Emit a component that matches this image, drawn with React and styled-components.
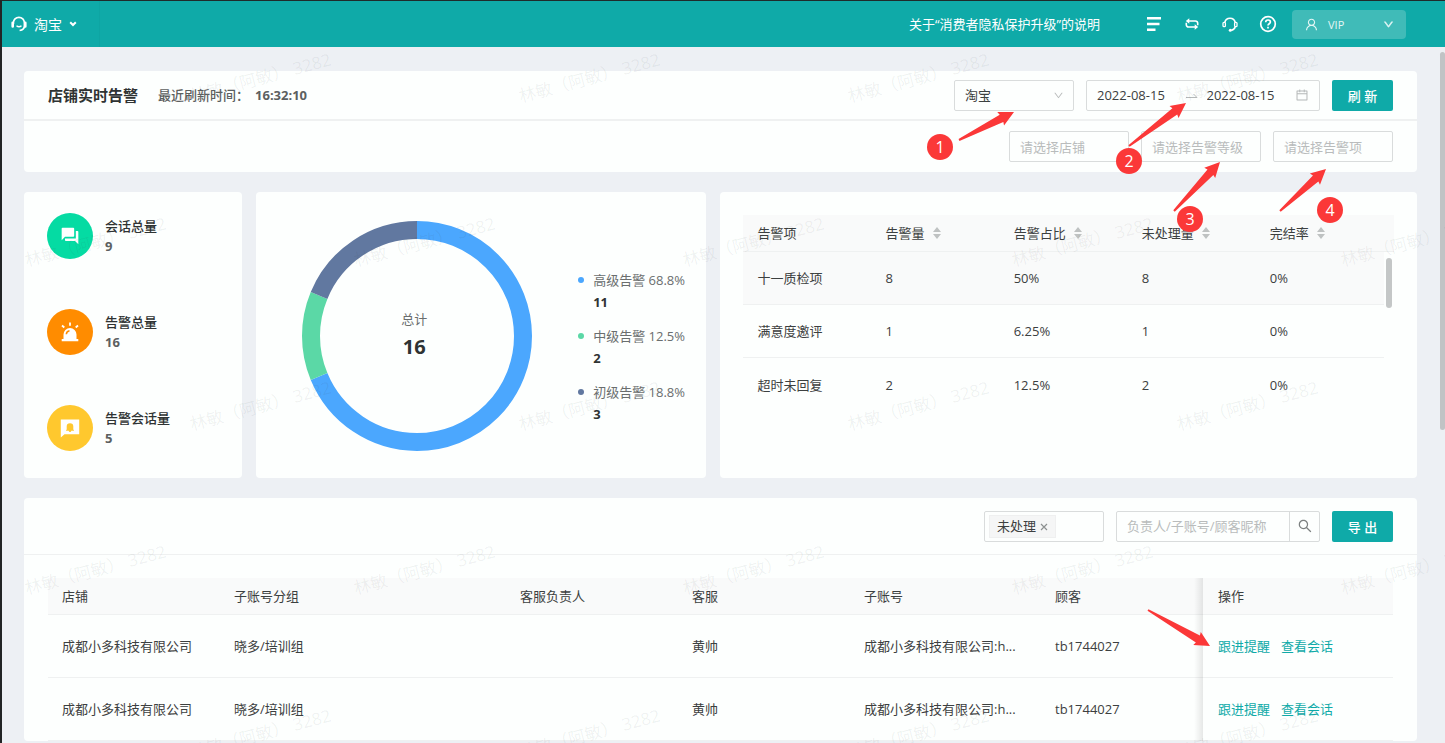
import React, { useState } from 'react';
import styled, { createGlobalStyle } from 'styled-components';
import { MdForum } from 'react-icons/md';
import { AiOutlineCalendar, AiOutlineDown, AiOutlineSearch, AiOutlineUser } from 'react-icons/ai';

const teal = '#0faaa8';
const red = '#fb3838';
const line = '#eff1f1';
const fieldBorder = '#d9dcdc';

const segments = [
  { name: '高级告警', percent: '68.8%', count: 11, color: '#4ba7fe' },
  { name: '中级告警', percent: '12.5%', count: 2, color: '#5bd8a6' },
  { name: '初级告警', percent: '18.8%', count: 3, color: '#6178a0' },
];

const alarms = [
  ['十一质检项', '8', '50%', '8', '0%'],
  ['满意度邀评', '1', '6.25%', '1', '0%'],
  ['超时未回复', '2', '12.5%', '2', '0%'],
];

const sessions = [1, 2].map(id => ({
  id,
  shop: '成都小多科技有限公司',
  group: '晓多/培训组',
  owner: '',
  agent: '黄帅',
  account: '成都小多科技有限公司:h...',
  customer: 'tb1744027',
}));

// coordinates are measured inside the Guide layer
const arrows = [
  { from: [59, 40], to: [114, 12] },
  { from: [229, 46], to: [286, 3] },
  { from: [274, 111], to: [320, 62] },
  { from: [380, 111], to: [426, 69] },
  { from: [248, 510], to: [310, 546] },
];

const markers = [
  { n: 1, x: 27, y: 34 },
  { n: 2, x: 216, y: 48 },
  { n: 3, x: 277, y: 106 },
  { n: 4, x: 417, y: 97 },
];

const GlobalStyle = createGlobalStyle`
  * {
    box-sizing: border-box;
  }

  body {
    margin: 0;
    overflow: hidden;
    background-color: #edf0f4;
  }

  body, input, select, button {
    font-family: 'Open Sans', 'Noto Sans CJK SC', sans-serif;
    font-size: 13px;
    color: #3c4040;
  }
`;

const Page = styled.div`
  position: relative;
  height: 100vh;
  overflow: hidden;
  border-top: 1px solid #1f2b2b;
  border-left: 2px solid #222425;
  line-height: 20px;
`;

const Header = styled.header`
  display: flex;
  align-items: center;
  height: 46px;
  padding-right: 39px;
  color: white;
  background-color: ${teal};
`;

const Brand = styled.button`
  display: flex;
  align-items: center;
  gap: 7px;
  width: 98px;
  height: 46px;
  padding: 0 9px;
  font-size: 14px;
  color: white;
  background-color: transparent;
  border: none;
  border-right: 1px solid #0ea5a3;
`;

const Notice = styled.a`
  margin-left: auto;
  padding-right: 35px;
  color: white;
  text-decoration: none;
`;

const HeaderButton = styled.button`
  display: flex;
  align-items: center;
  justify-content: center;
  width: 38px;
  height: 30px;
  padding: 0;
  color: white;
  background-color: transparent;
  border: none;
`;

const Account = styled.button`
  display: flex;
  align-items: center;
  gap: 9px;
  width: 114px;
  height: 29px;
  margin-left: 5px;
  padding: 0 12px;
  font-size: 11px;
  color: #e4f6f5;
  background-color: #40bbb8;
  border: none;
  border-radius: 4px;

  svg:last-child {
    margin-left: auto;
  }
`;

const Content = styled.main`
  display: flex;
  flex-direction: column;
  gap: 20px;
  padding: 24px 28px 0 22px;
`;

const Card = styled.section`
  min-width: 0;
  background-color: #fdfffe;
  border-radius: 4px;
`;

const Toolbar = styled.div`
  display: flex;
  align-items: center;
  justify-content: flex-end;
  gap: 12px;
  height: ${props => props.$height};
  padding: 0 24px;
  border-bottom: ${props => props.$border || '0'} solid ${line};
`;

const Title = styled.h1`
  margin: 0 8px 0 0;
  font-size: 15px;
  color: #2f3333;
`;

const Refreshed = styled.span`
  margin-right: auto;
  font-weight: 500;
  color: #5c6060;

  b {
    margin-left: 6px;
  }
`;

const SelectBox = styled.div`
  position: relative;
  width: 120px;
  color: #b9bcbc;

  svg {
    position: absolute;
    top: 10px;
    right: 10px;
    pointer-events: none;
  }
`;

const Select = styled.select`
  display: block;
  width: 100%;
  height: 31px;
  padding: 0 10px;
  color: ${props => (props.$empty ? '#b9bcbc' : '#3c4040')};
  background-color: transparent;
  border: 1px solid ${fieldBorder};
  border-radius: 2px;
  appearance: none;
`;

const Field = styled.div`
  display: flex;
  align-items: center;
  width: ${props => props.$width};
  height: 31px;
  color: #b4b8b8;
  border: 1px solid ${fieldBorder};
  border-radius: 2px;
`;

const DateField = styled(Field)`
  gap: 9px;
  padding: 0 10px;

  svg {
    flex: none;
  }
`;

const DateInput = styled.input`
  width: 80px;
  min-width: 0;
  padding: 0;
  background-color: transparent;
  border: none;
  outline: 0;
`;

const SearchInput = styled.input`
  flex: 1;
  min-width: 0;
  padding: 0 10px;
  background-color: transparent;
  border: none;
  outline: 0;

  &::placeholder {
    color: #b9bcbc;
  }
`;

const SearchButton = styled.button`
  display: flex;
  align-items: center;
  justify-content: center;
  width: 30px;
  height: 29px;
  padding: 0;
  color: #7c8080;
  background-color: transparent;
  border: none;
  border-left: 1px solid ${fieldBorder};
`;

const PrimaryButton = styled.button`
  width: 61px;
  height: 31px;
  padding: 0;
  font-weight: 500;
  color: white;
  background-color: ${teal};
  border: none;
  border-radius: 2px;
`;

const Tag = styled.span`
  display: flex;
  align-items: center;
  gap: 4px;
  height: 23px;
  margin-left: 4px;
  padding: 0 7px;
  color: #3c4040;
  background-color: #f5f6f6;
  border: 1px solid #eff0f0;
`;

const TagClose = styled.button`
  display: flex;
  padding: 2px 0 0;
  color: #8c9090;
  background-color: transparent;
  border: none;
`;

const Overview = styled.div`
  display: grid;
  grid-template-columns: 218fr 450fr 696fr;
  gap: 14px;
`;

const StatCard = styled(Card)`
  display: flex;
  flex-direction: column;
  gap: 50px;
  padding: 21px 23px 27px;
`;

const Stat = styled.div`
  display: flex;
  align-items: center;
  gap: 12px;
`;

const StatIcon = styled.span`
  display: flex;
  align-items: center;
  justify-content: center;
  width: 46px;
  height: 46px;
  color: white;
  background-color: ${props => props.$color};
  border-radius: 50%;
`;

const StatText = styled.div`
  font-weight: 700;
  color: #5c6060;

  strong {
    display: block;
    font-weight: 500;
    color: #2f3333;
  }
`;

const ChartCard = styled(Card)`
  display: flex;
  gap: 46px;
  padding: 29px 0 0 46px;
`;

const Donut = styled.div`
  position: relative;
  width: 230px;
  height: 230px;
`;

const DonutLabel = styled.div`
  position: absolute;
  inset: 0;
  display: flex;
  flex-direction: column;
  align-items: center;
  justify-content: center;
  gap: 8px;
  padding: 0 6px 6px 0;
  color: #6a6e6e;

  b {
    font-size: 20px;
    color: #2f3333;
  }
`;

const Legend = styled.ul`
  display: flex;
  flex-direction: column;
  gap: 12px;
  margin: 48px 0 0;
  padding: 0;
  list-style: none;
  line-height: 22px;
  color: #6a6e6e;
`;

const LegendItem = styled.li`
  display: grid;
  grid-template-columns: 6px auto;
  column-gap: 9px;
  align-items: center;

  &::before {
    content: '';
    width: 6px;
    height: 6px;
    background-color: ${props => props.$color};
    border-radius: 50%;
  }

  b {
    grid-column: 2;
    color: #2f3333;
  }
`;

const AlarmCard = styled(Card)`
  padding: 23px 23px 0;
`;

const AlarmScroll = styled.div`
  position: relative;

  &::after {
    content: '';
    position: absolute;
    top: 43px;
    right: 2px;
    width: 6px;
    height: 50px;
    background-color: #c4c7c7;
    border-radius: 3px;
  }
`;

const Table = styled.table`
  width: 100%;
  table-layout: fixed;
  border-spacing: 0;

  th, td {
    padding: 0 14px;
    font-weight: 400;
    text-align: left;
    white-space: nowrap;
    border-bottom: 1px solid ${line};
  }

  th {
    height: 37px;
    background-color: #f9fafa;
  }
`;

const AlarmTable = styled(Table)`
  th:last-child {
    width: 10px;
    padding: 0;
  }

  td {
    height: 53px;
  }

  tbody tr:first-child td {
    background-color: #f9fafa;
  }

  tbody tr:last-child td {
    border-bottom: none;
  }
`;

const SortButton = styled.button`
  display: inline-flex;
  align-items: center;
  gap: 8px;
  padding: 0;
  background-color: transparent;
  border: none;
`;

const SessionWrap = styled.div`
  padding: 23px 24px 0;
`;

const SessionTable = styled(Table)`
  td {
    height: 63px;
  }

  th:last-child, td:last-child {
    position: relative;
    padding-left: 16px;
  }

  th:last-child::before, td:last-child::before {
    content: '';
    position: absolute;
    top: 0;
    bottom: -1px;
    left: -8px;
    width: 9px;
    background: linear-gradient(to right, rgba(0, 0, 0, 0), rgba(0, 0, 0, 0.09));
  }
`;

const Col = styled.col`
  width: ${props => props.$width};
`;

const Action = styled.a`
  margin-right: 11px;
  color: ${teal};
  text-decoration: none;
`;

const PageScroll = styled.div`
  position: absolute;
  top: 51px;
  right: 0;
  width: 5px;
  height: 378px;
  background-color: #c1c3c5;
  border-radius: 3px;
`;

const Watermark = styled.div`
  position: absolute;
  top: -5px;
  left: 0;
  right: 0;
  bottom: 0;
  overflow: hidden;
  pointer-events: none;
`;

const WatermarkRow = styled.div`
  display: flex;
  margin-left: ${props => (props.$shift ? '-71px' : '94px')};
`;

const WatermarkText = styled.span`
  flex: 0 0 329px;
  height: 164px;
  line-height: 164px;
  text-align: center;
  font-size: 17px;
  white-space: pre;
  color: rgba(60, 70, 70, 0.07);
  transform: rotate(-15deg);
`;

const Guide = styled.div`
  position: absolute;
  top: 99px;
  right: 0;
  width: 545px;
  height: 560px;
  pointer-events: none;
`;

const Marker = styled.span`
  position: absolute;
  width: 26px;
  height: 26px;
  line-height: 26px;
  font-size: 16px;
  text-align: center;
  color: white;
  background-color: ${red};
  border-radius: 50%;
`;

const CaretIcon = () => (
  <svg width="8" height="6" viewBox="0 0 8 6" fill="none" stroke="currentColor" strokeWidth="2">
    <path d="M1.2 1.2 4 4l2.8-2.8" />
  </svg>
);

const HeadsetIcon = () => (
  <svg width="16" height="16" viewBox="0 0 16 16" fill="none" stroke="currentColor" strokeWidth="1.7">
    <path d="M2.4 8V6.800a5.500 5.500 0 0 1 11 0V10c0 2.400-2 4-4.800 4.500" />
    <path d="M1.700 6.800v3.600M14.300 6.800v3.600" strokeWidth="2.600" strokeLinecap="round" />
    <path d="M5.500 9.700c1.500 1.200 3.500 1.200 5 0" strokeWidth="1.400" />
  </svg>
);

const ServiceIcon = () => (
  <svg width="16" height="16" viewBox="0 0 16 16" fill="none" stroke="currentColor" strokeWidth="1.6">
    <path d="M2.800 6.500a5.300 5.300 0 0 1 10.400 0" />
    <rect x="1" y="6.300" width="2.400" height="4.400" rx="1" strokeWidth="1.300" />
    <rect x="12.600" y="6.300" width="2.400" height="4.400" rx="1" strokeWidth="1.300" />
    <path d="M13.200 11c-.6 1.900-2 3-4 3.300" />
    <circle cx="8.300" cy="14.300" r="1.500" fill="currentColor" stroke="none" />
  </svg>
);

const MenuIcon = () => (
  <svg width="16" height="16" viewBox="0 0 16 16" fill="currentColor">
    <path d="M1 1h14v2.500H1zM1 6.700h12.500v2.500H1zM1 12.400h8.500v2.500H1z" />
  </svg>
);

const LoopIcon = () => (
  <svg width="14" height="12" viewBox="0 0 14 12" fill="none" stroke="currentColor" strokeWidth="1.600">
    <path d="M3 3h7.500a2.200 2.200 0 0 1 2.200 2.200v2M11 9H3.500a2.200 2.200 0 0 1-2.200-2.200v-2" />
    <path d="M4.300.3.800 3l3.500 2.700zM9.700 6.300 13.200 9l-3.500 2.700z" fill="currentColor" stroke="none" />
  </svg>
);

const HelpIcon = () => (
  <svg width="18" height="18" viewBox="0 0 18 18" fill="none" stroke="currentColor" strokeWidth="1.700">
    <circle cx="9" cy="9" r="7.300" />
    <path d="M6.700 7.200c0-3 4.700-2.800 4.700-.2 0 1.700-2.400 1.700-2.400 3.500" />
    <path d="M9 11.800v1.800" />
  </svg>
);

const SirenIcon = () => (
  <svg width="20" height="20" viewBox="0 0 20 20" fill="currentColor">
    <path d="M3.500 17v-4.500a6.500 6.500 0 0 1 13 0V17h1.800v2.200H1.700V17z" />
    <path d="M6.300 12.300c.2-2 1.300-3.200 3.200-3.500" fill="none" stroke="#ff8c00" strokeWidth="1.500" />
    <path d="M10 .5v3.200M2 3.500l2.300 2M18 3.500l-2.300 2" fill="none" stroke="currentColor" strokeWidth="1.800" />
  </svg>
);

const BellChatIcon = () => (
  <svg width="20" height="20" viewBox="0 0 20 20" fill="currentColor">
    <path d="M.800 1.500h18.400v14.800H4.500L.800 19.500z" />
    <path d="M6 12.800v-.6l.7-.8V8.500a3.300 3.300 0 0 1 6.600 0v2.900l.7.800v.6h-2.700a1.300 1.300 0 0 1-2.600 0z" fill="#ffc82e" />
  </svg>
);

const RangeArrow = () => (
  <svg width="12" height="8" viewBox="0 0 12 8" fill="none" stroke="currentColor">
    <path d="M0 6.500h11L7.500 3" />
  </svg>
);

const SortIcon = () => (
  <svg width="8" height="12" viewBox="0 0 8 12" fill="#bfc2c2">
    <path d="M4 0l4 5H0zM4 12L0 7h8z" />
  </svg>
);

const CloseIcon = () => (
  <svg width="8" height="8" viewBox="0 0 8 8" stroke="currentColor" strokeWidth="1.200">
    <path d="M1 1l6 6M7 1L1 7" />
  </svg>
);

const DonutChart = () => {
  const total = segments.reduce((sum, s) => sum + s.count, 0);
  let offset = 0;

  return (
    <svg width="230" height="230" viewBox="0 0 230 230">
      <g transform="rotate(-90 115 115)" fill="none" strokeWidth="18">
        {segments.map(s => {
          const share = (s.count / total) * 100;
          const start = offset;
          offset += share;
          return (
            <circle
              key={s.name}
              cx="115"
              cy="115"
              r="106"
              stroke={s.color}
              pathLength="100"
              strokeDasharray={`${share} ${100 - share}`}
              strokeDashoffset={-start}
            />
          );
        })}
      </g>
    </svg>
  );
};

// tapered arrow that starts as a point and ends in a wide head
const Arrow = ({ from, to }) => {
  const dx = to[0] - from[0];
  const dy = to[1] - from[1];
  const length = Math.hypot(dx, dy);
  const angle = (Math.atan2(dy, dx) * 180) / Math.PI;
  const neck = length - 14;
  const barb = length - 15;

  return (
    <path
      transform={`translate(${from[0]} ${from[1]}) rotate(${angle})`}
      d={`M0 -1 L${neck} -4 L${barb} -7.500 L${length} 0 L${barb} 7.500 L${neck} 4 L0 1z`}
      fill={red}
    />
  );
};

const App = () => {
  const [platform, setPlatform] = useState('淘宝');
  const [from, setFrom] = useState('2022-08-15');
  const [to, setTo] = useState('2022-08-15');
  const [keyword, setKeyword] = useState('');

  return (
    <>
      <GlobalStyle />
      <Page>
        <Header>
          <Brand>
            <HeadsetIcon />
            淘宝
            <CaretIcon />
          </Brand>
          <Notice href="#notice">关于“消费者隐私保护升级”的说明</Notice>
          <HeaderButton aria-label="menu">
            <MenuIcon />
          </HeaderButton>
          <HeaderButton aria-label="switch">
            <LoopIcon />
          </HeaderButton>
          <HeaderButton aria-label="service">
            <ServiceIcon />
          </HeaderButton>
          <HeaderButton aria-label="help">
            <HelpIcon />
          </HeaderButton>
          <Account>
            <AiOutlineUser size={15} />
            VIP
            <AiOutlineDown size={11} strokeWidth={60} />
          </Account>
        </Header>

        <Content>
          <Card>
            <Toolbar $height="50px" $border="2px">
              <Title>店铺实时告警</Title>
              <Refreshed>
                最近刷新时间：<b>16:32:10</b>
              </Refreshed>
              <SelectBox>
                <Select
                  aria-label="platform"
                  value={platform}
                  onChange={event => setPlatform(event.target.value)}
                >
                  <option>淘宝</option>
                </Select>
                <AiOutlineDown size={11} />
              </SelectBox>
              <DateField $width="234px">
                <DateInput
                  aria-label="start date"
                  value={from}
                  onChange={event => setFrom(event.target.value)}
                />
                <RangeArrow />
                <DateInput
                  aria-label="end date"
                  value={to}
                  onChange={event => setTo(event.target.value)}
                />
                <AiOutlineCalendar size={14} />
              </DateField>
              <PrimaryButton>刷 新</PrimaryButton>
            </Toolbar>
            <Toolbar $height="51px">
              {['请选择店铺', '请选择告警等级', '请选择告警项'].map(text => (
                <SelectBox key={text}>
                  <Select $empty aria-label={text}>
                    <option>{text}</option>
                  </Select>
                </SelectBox>
              ))}
            </Toolbar>
          </Card>

          <Overview>
            <StatCard>
              <Stat>
                <StatIcon $color="#05dba3">
                  <MdForum size={20} />
                </StatIcon>
                <StatText>
                  <strong>会话总量</strong>9
                </StatText>
              </Stat>
              <Stat>
                <StatIcon $color="#ff8c00">
                  <SirenIcon />
                </StatIcon>
                <StatText>
                  <strong>告警总量</strong>16
                </StatText>
              </Stat>
              <Stat>
                <StatIcon $color="#ffc82e">
                  <BellChatIcon />
                </StatIcon>
                <StatText>
                  <strong>告警会话量</strong>5
                </StatText>
              </Stat>
            </StatCard>

            <ChartCard>
              <Donut>
                <DonutChart />
                <DonutLabel>
                  总计
                  <b>16</b>
                </DonutLabel>
              </Donut>
              <Legend>
                {segments.map(s => (
                  <LegendItem key={s.name} $color={s.color}>
                    <span>
                      {s.name} {s.percent}
                    </span>
                    <b>{s.count}</b>
                  </LegendItem>
                ))}
              </Legend>
            </ChartCard>

            <AlarmCard>
              <AlarmScroll>
                <AlarmTable>
                  <thead>
                    <tr>
                      <th>告警项</th>
                      {['告警量', '告警占比', '未处理量', '完结率'].map(name => (
                        <th key={name}>
                          <SortButton>
                            {name}
                            <SortIcon />
                          </SortButton>
                        </th>
                      ))}
                      <th />
                    </tr>
                  </thead>
                  <tbody>
                    {alarms.map(row => (
                      <tr key={row[0]}>
                        {row.map((cell, i) => (
                          <td key={i}>{cell}</td>
                        ))}
                      </tr>
                    ))}
                  </tbody>
                </AlarmTable>
              </AlarmScroll>
            </AlarmCard>
          </Overview>

          <Card>
            <Toolbar $height="57px" $border="1px">
              <Field $width="120px">
                <Tag>
                  未处理
                  <TagClose aria-label="remove">
                    <CloseIcon />
                  </TagClose>
                </Tag>
              </Field>
              <Field $width="204px">
                <SearchInput
                  aria-label="search"
                  placeholder="负责人/子账号/顾客昵称"
                  value={keyword}
                  onChange={event => setKeyword(event.target.value)}
                />
                <SearchButton aria-label="search">
                  <AiOutlineSearch size={16} />
                </SearchButton>
              </Field>
              <PrimaryButton>导 出</PrimaryButton>
            </Toolbar>
            <SessionWrap>
              <SessionTable>
                <colgroup>
                  <Col $width="172px" />
                  <Col $width="286px" />
                  <Col $width="172px" />
                  <Col $width="172px" />
                  <Col $width="191px" />
                  <Col />
                  <Col $width="191px" />
                </colgroup>
                <thead>
                  <tr>
                    <th>店铺</th>
                    <th>子账号分组</th>
                    <th>客服负责人</th>
                    <th>客服</th>
                    <th>子账号</th>
                    <th>顾客</th>
                    <th>操作</th>
                  </tr>
                </thead>
                <tbody>
                  {sessions.map(row => (
                    <tr key={row.id}>
                      <td>{row.shop}</td>
                      <td>{row.group}</td>
                      <td>{row.owner}</td>
                      <td>{row.agent}</td>
                      <td>{row.account}</td>
                      <td>{row.customer}</td>
                      <td>
                        <Action href="#remind">跟进提醒</Action>
                        <Action href="#session">查看会话</Action>
                      </td>
                    </tr>
                  ))}
                </tbody>
              </SessionTable>
            </SessionWrap>
          </Card>
        </Content>

        <PageScroll />

        <Watermark aria-hidden="true">
          {[0, 1, 2, 3, 4].map(row => (
            <WatermarkRow key={row} $shift={row % 2 === 1}>
              {[0, 1, 2, 3, 4].map(col => (
                <WatermarkText key={col}>林敏（阿敏） 3282</WatermarkText>
              ))}
            </WatermarkRow>
          ))}
        </Watermark>

        <Guide>
          <svg width="545" height="560">
            {arrows.map(arrow => (
              <Arrow key={arrow.to.join()} {...arrow} />
            ))}
          </svg>
          {markers.map(m => (
            <Marker key={m.n} style={{ left: m.x, top: m.y }}>
              {m.n}
            </Marker>
          ))}
        </Guide>
      </Page>
    </>
  );
};

export default App;
